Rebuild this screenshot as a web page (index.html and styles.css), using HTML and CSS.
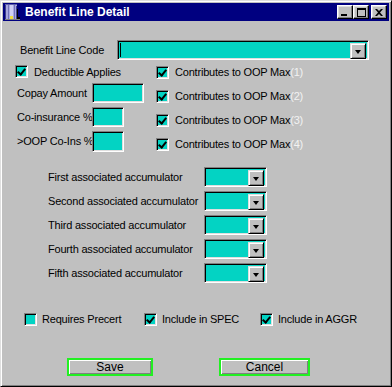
FILE: index.html
```html
<!DOCTYPE html>
<html lang="en">
<head>
  <meta charset="UTF-8" />
  <title>Benefit Line Detail</title>
  <link rel="stylesheet" href="styles.css">
</head>
<body>

  <div class="window">
    <div class="titlebar">
      <svg class="app-icon" width="16" height="16" viewBox="0 0 16 16">
        <rect x="1" y="1" width="12" height="14" fill="#a8a8e0"/>
        <rect x="1" y="1" width="1" height="14" fill="#404088"/>
        <rect x="4" y="1" width="1" height="14" fill="#7070b8"/>
        <rect x="6" y="1" width="3" height="14" fill="#d0d0f4"/>
        <rect x="10" y="1" width="1" height="14" fill="#7070b8"/>
        <rect x="12" y="2" width="1" height="13" fill="#404088"/>
        <rect x="1" y="0" width="12" height="1" fill="#6060a8"/>
        <rect x="13" y="5" width="1" height="9" fill="#000"/>
        <rect x="13" y="13" width="3" height="2" fill="#000"/>
        <rect x="6" y="12" width="3" height="3" fill="#f0e040"/>
        <rect x="1" y="15" width="15" height="1" fill="#808080"/>
      </svg>
      <span class="title">Benefit Line Detail</span>
      <div class="winbtns">
        <span class="winbtn"><i class="g-min"></i></span>
        <span class="winbtn"><i class="g-max"></i></span>
        <span class="winbtn close">
          <svg width="8" height="7" viewBox="0 0 8 7"><path d="M0 0h2l2 2 2-2h2L5 3.5 8 7H6L4 5 2 7H0l3-3.5z" fill="#000"/></svg>
        </span>
      </div>
    </div>

    <div class="content">
      <div class="code-row">
        <span class="code-label">Benefit Line Code</span>
        <div class="field combo wide"><span class="caret"></span><span class="drop"><b></b></span></div>
      </div>

      <div class="main-grid">
        <div class="left-col">
          <div class="chk-row"><span class="chk on"></span><span>Deductible Applies</span></div>
          <div class="input-row"><span class="in-label">Copay Amount</span><span class="field text amt"></span></div>
          <div class="input-row"><span class="in-label">Co-insurance %</span><span class="field text pct"></span></div>
          <div class="input-row"><span class="in-label">&gt;OOP Co-Ins %</span><span class="field text pct tall"></span></div>
        </div>
        <div class="right-col">
          <div class="chk-row"><span class="chk on"></span><span>Contributes to OOP Max<span class="dim">(1)</span></span></div>
          <div class="chk-row"><span class="chk on"></span><span>Contributes to OOP Max<span class="dim">(2)</span></span></div>
          <div class="chk-row"><span class="chk on"></span><span>Contributes to OOP Max<span class="dim">(3)</span></span></div>
          <div class="chk-row"><span class="chk on"></span><span>Contributes to OOP Max<span class="dim">(4)</span></span></div>
        </div>
      </div>

      <div class="accums">
        <span>First associated accumulator</span><div class="field combo small"><span class="drop"><b></b></span></div>
        <span>Second associated accumulator</span><div class="field combo small"><span class="drop"><b></b></span></div>
        <span>Third associated accumulator</span><div class="field combo small"><span class="drop"><b></b></span></div>
        <span>Fourth associated accumulator</span><div class="field combo small"><span class="drop"><b></b></span></div>
        <span>Fifth associated accumulator</span><div class="field combo small"><span class="drop"><b></b></span></div>
      </div>

      <div class="flags">
        <div class="chk-row"><span class="chk"></span><span>Requires Precert</span></div>
        <div class="chk-row"><span class="chk on"></span><span>Include in SPEC</span></div>
        <div class="chk-row"><span class="chk on"></span><span>Include in AGGR</span></div>
      </div>

      <div class="actions">
        <button class="btn save">Save</button>
        <button class="btn cancel">Cancel</button>
      </div>
    </div>
  </div>

</body>
</html>
```

FILE: styles.css
```css
body {
  margin: 0;
  background: #c0c0c0;
  font-family: 'Liberation Sans', Arial, sans-serif;
  font-size: 11px;
  letter-spacing: -0.2px;
  color: #000;
}
.window {
  width: 392px;
  height: 387px;
  box-sizing: border-box;
  background: #c0c0c0;
  border: 1px solid;
  border-color: #dfdfdf #000 #000 #dfdfdf;
  box-shadow: inset 1px 1px #fff, inset -1px -1px #808080;
  padding: 2px;
}
.titlebar {
  height: 18px;
  background: #000080;
  display: flex;
  align-items: center;
  padding-left: 1px;
}
.app-icon {
  flex: none;
}
.title {
  margin-left: 5px;
  color: #fff;
  font-weight: bold;
  font-size: 12px;
  letter-spacing: 0;
  flex: 1;
}
.winbtns {
  display: flex;
  margin-right: 2px;
}
.winbtn {
  width: 16px;
  height: 14px;
  box-sizing: border-box;
  background: #c0c0c0;
  border: 1px solid;
  border-color: #fff #000 #000 #fff;
  box-shadow: inset -1px -1px #808080, inset 1px 1px #dfdfdf;
  display: flex;
  align-items: center;
  justify-content: center;
  position: relative;
}
.winbtn.close {
  margin-left: 2px;
}
.g-min {
  position: absolute;
  left: 3px;
  bottom: 2px;
  width: 6px;
  height: 2px;
  background: #000;
}
.g-max {
  width: 9px;
  height: 9px;
  box-sizing: border-box;
  border: 1px solid #000;
  border-top-width: 2px;
}

/* sunken field */
.field {
  box-sizing: border-box;
  background: #03d3c3;
  border: 1px solid;
  border-color: #808080 #fff #fff #808080;
  box-shadow: inset 1px 1px #000, inset -1px -1px #dfdfdf;
  display: block;
  flex: none;
}
.combo {
  height: 20px;
  position: relative;
}
.combo.wide {
  width: 252px;
}
.combo.small {
  width: 63px;
}
.caret {
  position: absolute;
  left: 2px;
  top: 2px;
  width: 1px;
  height: 14px;
  background: #000;
}
.drop {
  position: absolute;
  right: 2px;
  top: 2px;
  width: 16px;
  height: 16px;
  box-sizing: border-box;
  background: #c0c0c0;
  border: 1px solid;
  border-color: #dfdfdf #000 #000 #dfdfdf;
  box-shadow: inset 1px 1px #fff, inset -1px -1px #808080;
  display: flex;
  align-items: center;
  justify-content: center;
}
.drop b {
  width: 0;
  height: 0;
  border-left: 3.5px solid transparent;
  border-right: 3.5px solid transparent;
  border-top: 4px solid #000;
  margin-top: 1px;
}

.code-row {
  display: flex;
  align-items: center;
  margin-top: 19px;
  height: 20px;
}
.code-label {
  margin-left: 17px;
  width: 97px;
  flex: none;
}

.main-grid {
  display: flex;
  margin-left: 12px;
}
.left-col {
  width: 141px;
  flex: none;
  display: grid;
  grid-template-rows: 23px 24px 24px 21px;
}
.right-col {
  display: grid;
  grid-template-rows: repeat(4, 24px);
}
.chk-row {
  display: flex;
  align-items: center;
  gap: 6px;
  white-space: nowrap;
}
.chk {
  width: 13px;
  height: 13px;
  box-sizing: border-box;
  flex: none;
  background: #03d3c3;
  border: 1px solid;
  border-color: #808080 #fff #fff #808080;
  box-shadow: inset 1px 1px #000, inset -1px -1px #dfdfdf;
  position: relative;
}
.chk.on::after {
  content: "";
  position: absolute;
  left: 2px;
  top: 1px;
  width: 3px;
  height: 6px;
  border: solid #000;
  border-width: 0 2px 2px 0;
  transform: translate(1px, 0) rotate(40deg);
}
.dim {
  color: #f2f2f2;
}
.input-row {
  display: flex;
  align-items: flex-start;
}
.in-label {
  width: 75px;
  flex: none;
  padding-left: 2px;
  line-height: 20px;
  white-space: nowrap;
}
.text {
  height: 20px;
}
.amt {
  width: 52px;
}
.pct {
  width: 32px;
}
.pct.tall {
  height: 21px;
}

.accums {
  display: grid;
  grid-template-columns: 156px 63px;
  grid-template-rows: repeat(5, 20px);
  row-gap: 4px;
  align-items: center;
  margin: 11px 0 0 45px;
  white-space: nowrap;
}

.flags {
  display: grid;
  grid-template-columns: 120px 116px auto;
  height: 20px;
  margin: 26px 0 0 21px;
}
.flags .chk-row {
  gap: 5px;
}

.actions {
  display: flex;
  margin: 29px 0 0 64px;
  gap: 66px;
}
.btn {
  height: 18px;
  box-sizing: border-box;
  background: #c0c0c0;
  border: 2px solid #22f022;
  box-shadow: inset 1px 1px #fff, inset -1px -1px #808080;
  font-family: 'Liberation Sans', Arial, sans-serif;
  font-size: 12px;
  padding: 0;
  color: #000;
}
.save {
  width: 86px;
}
.cancel {
  width: 91px;
}
```
